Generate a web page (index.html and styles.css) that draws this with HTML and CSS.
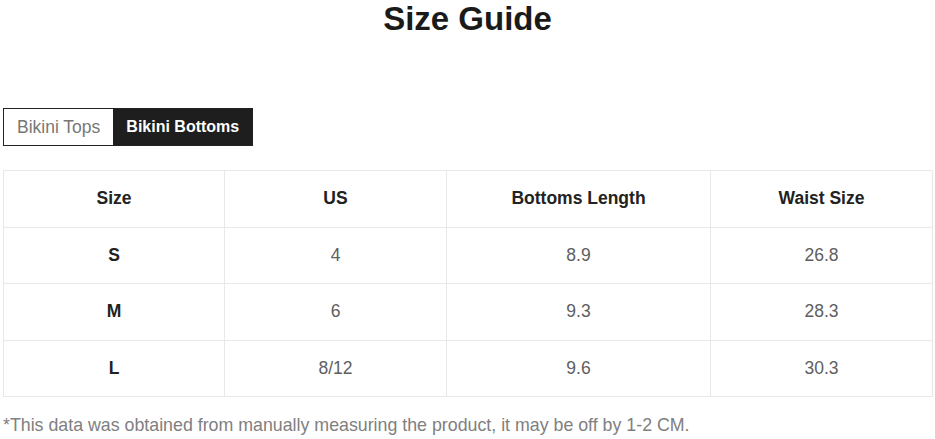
FILE: index.html
```html
<!DOCTYPE html>
<html lang="en">
<head>
  <meta charset="UTF-8">
  <meta name="viewport" content="width=device-width, initial-scale=1.0">
  <title>Size Guide</title>
  <link rel="stylesheet" href="styles.css">
</head>
<body>
  <h1 class="title">Size Guide</h1>

  <div class="tabs">
    <div class="tab">Bikini Tops</div>
    <div class="tab active">Bikini Bottoms</div>
  </div>

  <table class="size-table">
    <colgroup>
      <col class="col-size">
      <col class="col-us">
      <col class="col-length">
      <col class="col-waist">
    </colgroup>
    <thead>
      <tr>
        <th>Size</th>
        <th>US</th>
        <th>Bottoms Length</th>
        <th>Waist Size</th>
      </tr>
    </thead>
    <tbody>
      <tr><td class="size">S</td><td>4</td><td>8.9</td><td>26.8</td></tr>
      <tr><td class="size">M</td><td>6</td><td>9.3</td><td>28.3</td></tr>
      <tr><td class="size">L</td><td>8/12</td><td>9.6</td><td>30.3</td></tr>
    </tbody>
  </table>

  <p class="note">*This data was obtained from manually measuring the product, it may be off by 1-2 CM.</p>
</body>
</html>
```

FILE: styles.css
```css
body {
  margin: 0;
  padding: 0 3px;
  background: #fff;
  font-family: "Liberation Sans", Arial, sans-serif;
  color: #222;
}

.title {
  margin: 0;
  height: 38px;
  line-height: 38px;
  text-align: center;
  font-size: 33px;
  font-weight: bold;
  color: #1a1a1a;
}

.tabs {
  display: flex;
  width: fit-content;
  margin-top: 70px;
  border: 1px solid #222;
}

.tab {
  height: 36px;
  line-height: 36px;
  padding: 0 13px;
  font-size: 17.5px;
  color: #777;
  background: #fff;
}

.tab.active {
  background: #1e1e1e;
  color: #fff;
  font-weight: bold;
  font-size: 16px;
}

.size-table {
  margin-top: 24px;
  width: 929px;
  border-collapse: collapse;
  table-layout: fixed;
}

.col-size { width: 221px; }
.col-us { width: 222px; }
.col-length { width: 264px; }
.col-waist { width: 222px; }

.size-table th,
.size-table td {
  height: 55.5px;
  padding: 0;
  border: 1px solid #e8e8e8;
  text-align: center;
  font-size: 17.5px;
}

.size-table th {
  font-weight: bold;
  color: #222;
}

.size-table td {
  color: #5e5e5e;
}

.size-table td.size {
  font-weight: bold;
  color: #222;
}

.note {
  margin: 18px 0 0;
  font-size: 17.8px;
  color: #808080;
}
```
